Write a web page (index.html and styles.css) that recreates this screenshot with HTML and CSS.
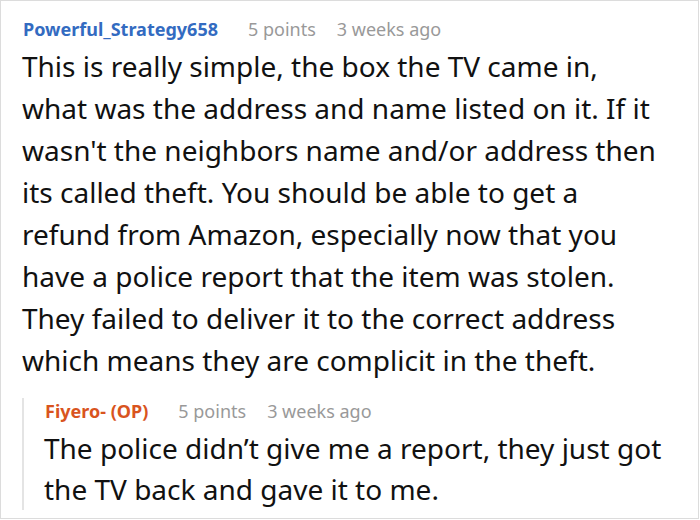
FILE: index.html
```html
<!DOCTYPE html>
<html>
<head>
<meta charset="utf-8">
<link rel="stylesheet" href="styles.css">
</head>
<body>
<div class="frame">
  <div class="comment">
    <div class="meta">
      <span class="author">Powerful_Strategy658</span>
      <span class="points">5 points</span>
      <span class="time">3 weeks ago</span>
    </div>
    <p class="text">This is really simple, the box the TV came in, what was the address and name listed on it. If it wasn't the neighbors name and/or address then its called theft. You should be able to get a refund from Amazon, especially now that you have a police report that the item was stolen. They failed to deliver it to the correct address which means they are complicit in the theft.</p>
    <div class="reply">
      <div class="meta">
        <span class="author op">Fiyero- (OP)</span>
        <span class="points">5 points</span>
        <span class="time">3 weeks ago</span>
      </div>
      <p class="text reply-text">The police didn’t give me a report, they just got the TV back and gave it to me.</p>
    </div>
  </div>
</div>
</body>
</html>
```
FILE: styles.css
```css
html, body {
  margin: 0;
  padding: 0;
  background: #fff;
}
.frame {
  box-sizing: border-box;
  width: 699px;
  height: 519px;
  border: 1px solid #dcdcdc;
  overflow: hidden;
  font-family: "Noto Sans", "Open Sans", sans-serif;
}
.comment {
  padding: 15px 28px 0 21px;
}
.meta {
  display: flex;
  align-items: baseline;
  gap: 21px;
  font-size: 18px;
  line-height: 26px;
  color: #999;
  padding-left: 1px;
}
.author {
  font-weight: 700;
  color: #336bc1;
  margin-right: 9px;
}
.author.op {
  color: #d9541e;
}
.text {
  margin: 0;
  font-size: 28px;
  line-height: 42px;
  color: #111;
  padding-top: 3px;
}
.reply {
  margin-top: 17px;
  border-left: 2px solid #e4e4e4;
  padding-left: 20px;
}
.reply-text {
  line-height: 41px;
  padding-top: 4px;
}
```
